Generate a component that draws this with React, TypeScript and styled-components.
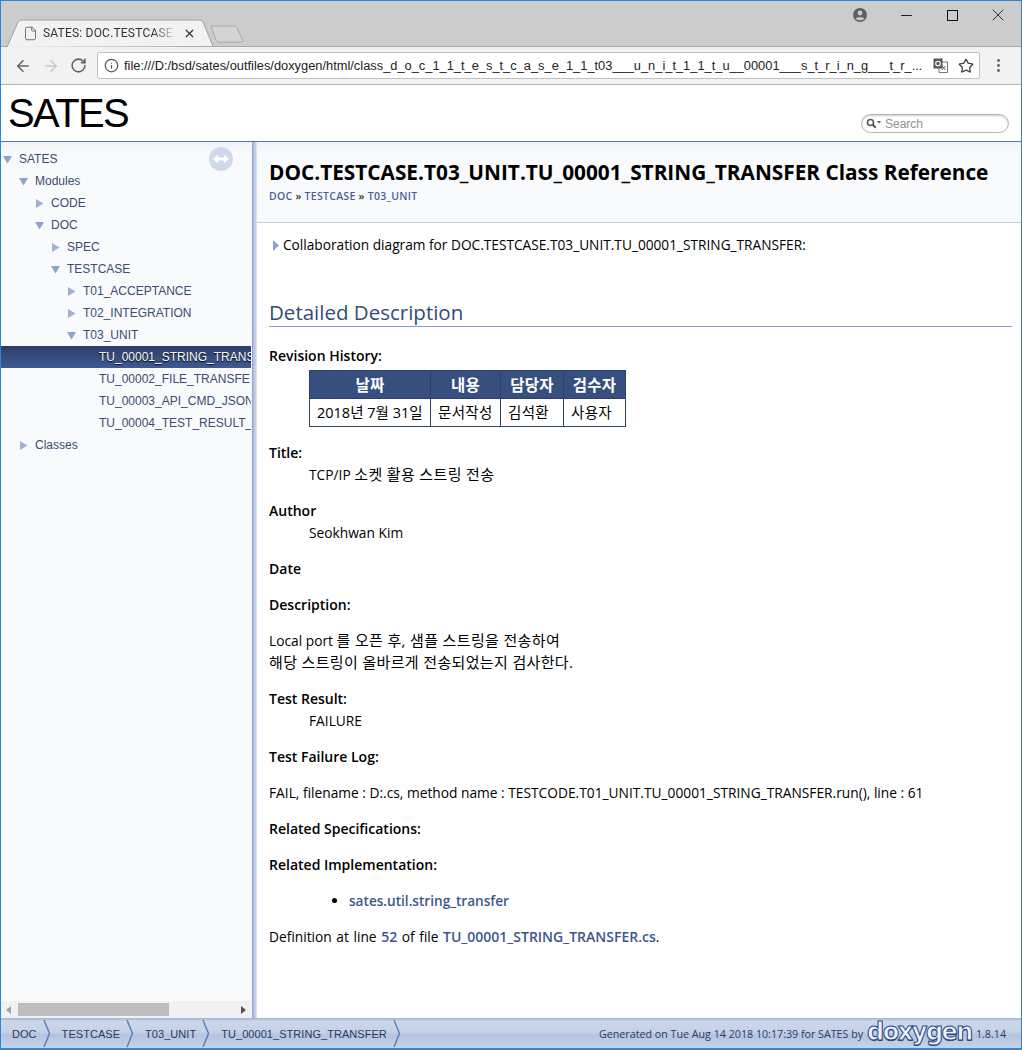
import React from 'react';
import styled, { createGlobalStyle } from 'styled-components';
import { ArrowLeft, ArrowRight, File, Info, Minus, MoreVertical, RotateCw, Star, X } from 'lucide-react';

const bodyFont = '"Open Sans", "Noto Sans CJK KR", sans-serif';
const navFont = '"Liberation Sans", Arial, sans-serif';

const GlobalStyle = createGlobalStyle`
  html, body {
    margin: 0;
    padding: 0;
    background: #fff;
  }
  * {
    box-sizing: border-box;
  }
`;

const Window = styled.div`
  width: 1022px;
  height: 1050px;
  border: 1px solid #2b87d3;
  border-width: 1px 1px 2px 1px;
  display: flex;
  flex-direction: column;
  overflow: hidden;
  font-family: ${bodyFont};
`;

const TitleBar = styled.div`
  height: 46px;
  flex: none;
  background: #cccccc;
  display: flex;
  align-items: flex-end;
  padding-left: 6px;
  border-bottom: 1px solid #a8a8a8;
  position: relative;
`;

const Tab = styled.div`
  position: relative;
  width: 206px;
  height: 28px;
  margin-bottom: -1px;
  display: flex;
  align-items: center;
  padding: 0 0 0 16px;
  font: 12px Roboto, ${navFont};
  letter-spacing: 0.2px;
  color: #333;
`;

const TabShape = styled.svg`
  position: absolute;
  left: 0;
  top: 0;
`;

const TabTitle = styled.span`
  position: relative;
  width: 133px;
  margin-left: 5px;
  white-space: nowrap;
  -webkit-mask-image: linear-gradient(to right, #000 110px, transparent 133px);
  mask-image: linear-gradient(to right, #000 110px, transparent 133px);
`;

const TabClose = styled(X)`
  position: relative;
  margin-left: 7px;
  color: #333;
`;

const TabIcon = styled(File)`
  position: relative;
  color: #555;
`;

const NewTab = styled.svg`
  margin: 0 0 3px -3px;
`;

const WindowControls = styled.div`
  position: absolute;
  right: 0;
  top: 0;
  height: 28px;
  display: flex;
  align-items: center;
  color: #111;
`;

const WindowButton = styled.div`
  width: 46px;
  display: flex;
  justify-content: center;
`;

const ProfileIcon = styled.svg`
  margin-right: 15px;
`;

const Toolbar = styled.div`
  height: 38px;
  flex: none;
  background: #f2f2f2;
  border-bottom: 1px solid #b4b4b4;
  display: flex;
  align-items: center;
  padding: 0 0 0 13px;
`;

const NavButton = styled.div<{ $dim?: boolean }>`
  width: 28px;
  display: flex;
  color: ${p => (p.$dim ? '#c8c8c8' : '#5f6368')};
`;

const Omnibox = styled.div`
  margin-left: -1px;
  width: 883px;
  height: 27px;
  background: #fff;
  border: 1px solid #c0c0c0;
  border-radius: 2px;
  display: flex;
  align-items: center;
  padding: 0 5px 0 6px;
  color: #555;
`;

const Url = styled.span`
  margin-left: 5px;
  flex: 1;
  font: 12.85px ${navFont};
  color: #222;
  white-space: nowrap;
`;

const TranslateIcon = styled.svg`
  margin-right: 10px;
`;

const MenuButton = styled.div`
  margin-left: 10px;
  display: flex;
  color: #5f6368;
`;

const TopHeader = styled.div`
  height: 57px;
  flex: none;
  background: #fff;
  border-bottom: 1px solid #5373b4;
  display: flex;
  justify-content: space-between;
  padding: 0 12px 0 7px;
`;

const ProjectName = styled.div`
  font: 40px/57px "Liberation Sans", Tahoma, sans-serif;
  letter-spacing: -1.6px;
  color: #000;
`;

const SearchBox = styled.div`
  width: 148px;
  height: 19px;
  margin-top: 29px;
  border: 1px solid #b5b5b5;
  border-radius: 10px;
  box-shadow: inset 0 1px 2px #ccc;
  display: flex;
  align-items: center;
  gap: 4px;
  padding-left: 4px;
  font: 12px ${navFont};
  color: #909090;
`;

const Middle = styled.div`
  flex: 1;
  min-height: 0;
  display: flex;
`;

const Sidebar = styled.div`
  width: 250px;
  flex: none;
  background: linear-gradient(to bottom, #f1f3f8 0, #f9fafc 12px);
  display: flex;
  flex-direction: column;
  position: relative;
`;

const Tree = styled.div`
  flex: 1;
  padding-top: 6px;
  overflow: hidden;
`;

const TreeRow = styled.div<{ $selected?: boolean; $level: number }>`
  height: 22px;
  display: flex;
  align-items: center;
  padding-left: ${p => p.$level * 16 + 1}px;
  font: 12px/22px ${navFont};
  white-space: nowrap;
  color: ${p => (p.$selected ? '#fff' : '#3a4c70')};
  background: ${p => (p.$selected ? 'linear-gradient(to bottom, #2a3d66, #3f5a92)' : 'transparent')};
  text-shadow: ${p => (p.$selected ? '0 1px 1px #000' : 'none')};
`;

const Arrow = styled.svg`
  flex: none;
  margin-right: 6px;
`;

const ArrowGap = styled.span`
  width: 17px;
  flex: none;
`;

const SyncButton = styled.svg`
  position: absolute;
  left: 208px;
  top: 5px;
`;

const HScroll = styled.div`
  height: 17px;
  flex: none;
  background: #f1f1f1;
  display: flex;
  align-items: center;
  justify-content: space-between;
  padding: 0 5px;
  position: relative;
`;

const HThumb = styled.div`
  position: absolute;
  left: 17px;
  top: 2px;
  width: 151px;
  height: 13px;
  background: #bdbdbd;
`;

const ScrollArrow = styled.div<{ $right?: boolean }>`
  width: 0;
  height: 0;
  border-top: 4px solid transparent;
  border-bottom: 4px solid transparent;
  ${p => (p.$right ? 'border-left: 5px solid #505050;' : 'border-right: 5px solid #a3a3a3;')}
`;

const Splitter = styled.div`
  width: 6px;
  flex: none;
  background: linear-gradient(to right, #f0f2f8 0, #f0f2f8 1px, #8ca0cc 1px, #b9c6e2 3px, #c8d3e9 5px, #e8ecf5 6px);
`;

const Content = styled.div`
  flex: 1;
  min-width: 0;
  background: #fff;
  color: #000;
  font-size: 13.75px;
  line-height: 22px;
`;

const ContentHeader = styled.div`
  height: 81px;
  background: linear-gradient(to bottom, #f1f3f8 0, #f9fafc 12px);
  border-bottom: 1px solid #c4cfe5;
  padding: 18px 12px 0;
`;

const PageTitle = styled.div`
  font-size: 20.8px;
  font-weight: 700;
  line-height: 25px;
  white-space: nowrap;
`;

const Crumbs = styled.div`
  font-size: 10.5px;
  font-weight: 600;
  line-height: 22px;
  letter-spacing: 0.28px;
  color: #4a5f95;
`;

const Body = styled.div`
  padding: 11px 9px 0 12px;
`;

const Collaboration = styled.div`
  display: flex;
  align-items: center;
  height: 22px;
  gap: 4px;
  padding-left: 4px;
  font-size: 13.7px;
`;

const CollabArrow = styled.svg`
  flex: none;
`;

const SectionTitle = styled.h2`
  margin: 44px 0 0;
  height: 27px;
  font-size: 20.5px;
  line-height: 24px;
  font-weight: 400;
  color: #354c7b;
  border-bottom: 1px solid #879ecb;
`;

const Ko = styled.span`
  font-size: 15px;
  line-height: 0;
  letter-spacing: 0.35px;
`;

const Term = styled.div<{ $gap?: number }>`
  font-size: 14px;
  font-weight: 600;
  margin-top: ${p => p.$gap ?? 14}px;
`;

const Detail = styled.div`
  margin-left: 40px;
`;

const Para = styled.p<{ $wide?: boolean }>`
  margin: 14px 0 0;
  white-space: nowrap;
  word-spacing: ${p => (p.$wide ? '1px' : '0')};
`;

const RevisionTable = styled.table`
  margin: 3px 0 0 40px;
  border-collapse: collapse;
  font-size: 14.5px;
  line-height: 20px;
  letter-spacing: 0.3px;
  th, td {
    border: 1px solid #2d4068;
    padding: 0;
    height: 28px;
    white-space: nowrap;
  }
  th {
    background: #374f7f;
    color: #fff;
    font-size: 15.5px;
    font-weight: 700;
    text-align: center;
  }
  td {
    padding-left: 7px;
    text-align: left;
  }
  td:first-child {
    letter-spacing: 0;
  }
`;

const Col = styled.col<{ $width: number }>`
  width: ${p => p.$width}px;
`;

const LinkList = styled.ul`
  margin: 14px 0 0;
  padding-left: 80px;
`;

const DocLink = styled.span`
  font-size: 14px;
  color: #3d578c;
  font-weight: 600;
`;

const ListLink = styled(DocLink)`
  font-size: 13.6px;
`;

const FooterBar = styled.div`
  height: 30px;
  flex: none;
  background: linear-gradient(to bottom, #a9bbdb 0, #cdd7ea 2px, #c5d1e7 45%, #b4c3df 55%, #c8d3e8 100%);
  display: flex;
  align-items: center;
  justify-content: space-between;
  padding: 0 15px 0 0;
  border-top: 1px solid #a8b8d8;
`;

const FooterCrumbs = styled.div`
  display: flex;
  align-items: center;
  height: 100%;
  font: 11px ${navFont};
  letter-spacing: 0.05px;
  color: #283a5d;
`;

const FooterCrumb = styled.div`
  display: flex;
  align-items: center;
  height: 100%;
  padding-left: 11px;
  gap: 6px;
`;

const Chevron = styled.svg`
  flex: none;
`;

const Generated = styled.div`
  display: flex;
  align-items: center;
  gap: 4px;
  font-size: 10.7px;
  color: #2a3d66;
`;

const DoxygenLogo = styled.span`
  font: 700 24px/26px "DejaVu Sans", sans-serif;
  letter-spacing: -1.5px;
  color: #eef2fa;
  -webkit-text-stroke: 1px #2d4a86;
  text-shadow: 0 1px 0 #2d4a86;
  margin-top: -4px;
`;

const CrumbSep = styled.span`
  color: #333;
`;

const Expander: React.FC<{ open?: boolean }> = ({ open }) => (
  <Arrow width="11" height="11" viewBox="0 0 11 11">
    {open ? <path d="M1 2h9L5.5 9.5z" fill="#8fa3cc" /> : <path d="M2 1v9l7.5-4.5z" fill="#9fb1d5" />}
  </Arrow>
);

const treeItems = [
  { label: 'SATES', level: 0, state: 'open' },
  { label: 'Modules', level: 1, state: 'open' },
  { label: 'CODE', level: 2, state: 'closed' },
  { label: 'DOC', level: 2, state: 'open' },
  { label: 'SPEC', level: 3, state: 'closed' },
  { label: 'TESTCASE', level: 3, state: 'open' },
  { label: 'T01_ACCEPTANCE', level: 4, state: 'closed' },
  { label: 'T02_INTEGRATION', level: 4, state: 'closed' },
  { label: 'T03_UNIT', level: 4, state: 'open' },
  { label: 'TU_00001_STRING_TRANS', level: 5, selected: true },
  { label: 'TU_00002_FILE_TRANSFE', level: 5 },
  { label: 'TU_00003_API_CMD_JSON', level: 5 },
  { label: 'TU_00004_TEST_RESULT_', level: 5 },
  { label: 'Classes', level: 1, state: 'closed' },
];

const footerItems = ['DOC', 'TESTCASE', 'T03_UNIT', 'TU_00001_STRING_TRANSFER'];

const App: React.FC = () => {
  return (
    <Window>
      <GlobalStyle />
      <TitleBar>
        <Tab>
          <TabShape width="206" height="28" viewBox="0 0 206 28">
            <path d="M0 28 L11 3 Q12 1 15 1 H192 Q195 1 196 3 L206 27" fill="#f2f2f2" stroke="#a0a0a0" />
          </TabShape>
          <TabIcon size={15} strokeWidth={1.3} />
          <TabTitle>SATES: DOC.TESTCASE.T0</TabTitle>
          <TabClose size={13} strokeWidth={2.2} />
        </Tab>
        <NewTab width="34" height="18" viewBox="0 0 34 18">
          <path d="M1 1 H25 Q26 1 27 3 L33 16 Q33 17 32 17 H8 Q7 17 6 15 Z" fill="#d4d4d4" stroke="#a8a8a8" />
        </NewTab>
        <WindowControls>
          <ProfileIcon width="16" height="16" viewBox="0 0 16 16">
            <circle cx="8" cy="8" r="7" fill="#5f5f5f" />
            <circle cx="8" cy="6" r="2.4" fill="#ccc" />
            <path d="M3.5 11.5c1-1.7 8-1.7 9 0-2 2.4-7 2.4-9 0z" fill="#ccc" />
          </ProfileIcon>
          <WindowButton>
            <Minus size={17} strokeWidth={1.3} />
          </WindowButton>
          <WindowButton>
            <svg width="11" height="11" viewBox="0 0 11 11">
              <rect x="0.5" y="0.5" width="10" height="10" fill="none" stroke="#111" />
            </svg>
          </WindowButton>
          <WindowButton>
            <X size={20} strokeWidth={1} />
          </WindowButton>
        </WindowControls>
      </TitleBar>
      <Toolbar>
        <NavButton>
          <ArrowLeft size={18} strokeWidth={2} />
        </NavButton>
        <NavButton $dim>
          <ArrowRight size={18} strokeWidth={2} />
        </NavButton>
        <NavButton>
          <RotateCw size={17} strokeWidth={2.2} />
        </NavButton>
        <Omnibox>
          <Info size={15} strokeWidth={2} />
          <Url>file:///D:/bsd/sates/outfiles/doxygen/html/class_d_o_c_1_1_t_e_s_t_c_a_s_e_1_1_t03___u_n_i_t_1_1_t_u__00001___s_t_r_i_n_g___t_r_...</Url>
          <TranslateIcon width="15" height="15" viewBox="0 0 15 15">
            <path d="M6 4h8.5v10.5H6z" fill="#fff" stroke="#777" />
            <path d="M0.5 0.5h9v10h-9z" fill="#555" />
            <circle cx="5" cy="5.5" r="2.3" fill="none" stroke="#fff" strokeWidth="1.1" />
            <path d="M9 8l3.5 4M12.5 8L9 12" stroke="#666" />
          </TranslateIcon>
          <Star size={16} strokeWidth={2} color="#444" />
        </Omnibox>
        <MenuButton>
          <MoreVertical size={17} strokeWidth={2.2} />
        </MenuButton>
      </Toolbar>
      <TopHeader>
        <ProjectName>SATES</ProjectName>
        <SearchBox>
          <svg width="15" height="11" viewBox="0 0 15 11">
            <circle cx="4.5" cy="4.5" r="3" fill="none" stroke="#555" strokeWidth="1.6" />
            <path d="M6.8 6.8l3 3" stroke="#555" strokeWidth="2" />
            <path d="M11 3h4l-2 2.5z" fill="#555" />
          </svg>
          Search
        </SearchBox>
      </TopHeader>
      <Middle>
        <Sidebar>
          <Tree>
            {treeItems.map(item => (
              <TreeRow key={item.label} $level={item.level} $selected={item.selected}>
                {item.state ? <Expander open={item.state === 'open'} /> : <ArrowGap />}
                {item.label}
              </TreeRow>
            ))}
          </Tree>
          <SyncButton width="24" height="24" viewBox="0 0 24 24">
            <circle cx="12" cy="12" r="12" fill="#d0d9ec" />
            <path d="M4 12l5-4.5v3h6v-3l5 4.5-5 4.5v-3H9v3z" fill="#fff" />
          </SyncButton>
          <HScroll>
            <HThumb />
            <ScrollArrow />
            <ScrollArrow $right />
          </HScroll>
        </Sidebar>
        <Splitter />
        <Content>
          <ContentHeader>
            <PageTitle>DOC.TESTCASE.T03_UNIT.TU_00001_STRING_TRANSFER Class Reference</PageTitle>
            <Crumbs>
              DOC <CrumbSep>»</CrumbSep> TESTCASE <CrumbSep>»</CrumbSep> T03_UNIT
            </Crumbs>
          </ContentHeader>
          <Body>
            <Collaboration>
              <CollabArrow width="6" height="11" viewBox="0 0 6 11">
                <path d="M0 0v11l6-5.5z" fill="#8fa3cc" />
              </CollabArrow>
              Collaboration diagram for DOC.TESTCASE.T03_UNIT.TU_00001_STRING_TRANSFER:
            </Collaboration>
            <SectionTitle>Detailed Description</SectionTitle>
            <Term $gap={18}>Revision History:</Term>
            <RevisionTable>
              <colgroup>
                <Col $width={121} />
                <Col $width={70} />
                <Col $width={63} />
                <Col $width={62} />
              </colgroup>
              <thead>
                <tr>
                  <th>날짜</th>
                  <th>내용</th>
                  <th>담당자</th>
                  <th>검수자</th>
                </tr>
              </thead>
              <tbody>
                <tr>
                  <td>2018년 7월 31일</td>
                  <td>문서작성</td>
                  <td>김석환</td>
                  <td>사용자</td>
                </tr>
              </tbody>
            </RevisionTable>
            <Term $gap={15}>Title:</Term>
            <Detail>
              TCP/IP <Ko>소켓 활용 스트링 전송</Ko>
            </Detail>
            <Term>Author</Term>
            <Detail>Seokhwan Kim</Detail>
            <Term>Date</Term>
            <Term>Description:</Term>
            <Para>
              Local port <Ko>를 오픈 후, 샘플 스트링을 전송하여</Ko>
              <br />
              <Ko>해당 스트링이 올바르게 전송되었는지 검사한다.</Ko>
            </Para>
            <Term>Test Result:</Term>
            <Detail>FAILURE</Detail>
            <Term>Test Failure Log:</Term>
            <Para>FAIL, filename : D:.cs, method name : TESTCODE.T01_UNIT.TU_00001_STRING_TRANSFER.run(), line : 61</Para>
            <Term>Related Specifications:</Term>
            <Term>Related Implementation:</Term>
            <LinkList>
              <li>
                <ListLink>sates.util.string_transfer</ListLink>
              </li>
            </LinkList>
            <Para $wide>
              Definition at line <DocLink>52</DocLink> of file <DocLink>TU_00001_STRING_TRANSFER.cs</DocLink>.
            </Para>
          </Body>
        </Content>
      </Middle>
      <FooterBar>
        <FooterCrumbs>
          {footerItems.map(item => (
            <FooterCrumb key={item}>
              {item}
              <Chevron width="8" height="29" viewBox="0 0 8 29">
                <path d="M1 1l5.5 13.5L1 28" fill="none" stroke="#5f7fbb" strokeWidth="1.5" />
              </Chevron>
            </FooterCrumb>
          ))}
        </FooterCrumbs>
        <Generated>
          Generated on Tue Aug 14 2018 10:17:39 for SATES by
          <DoxygenLogo>doxygen</DoxygenLogo>
          1.8.14
        </Generated>
      </FooterBar>
    </Window>
  );
};

export default App;
